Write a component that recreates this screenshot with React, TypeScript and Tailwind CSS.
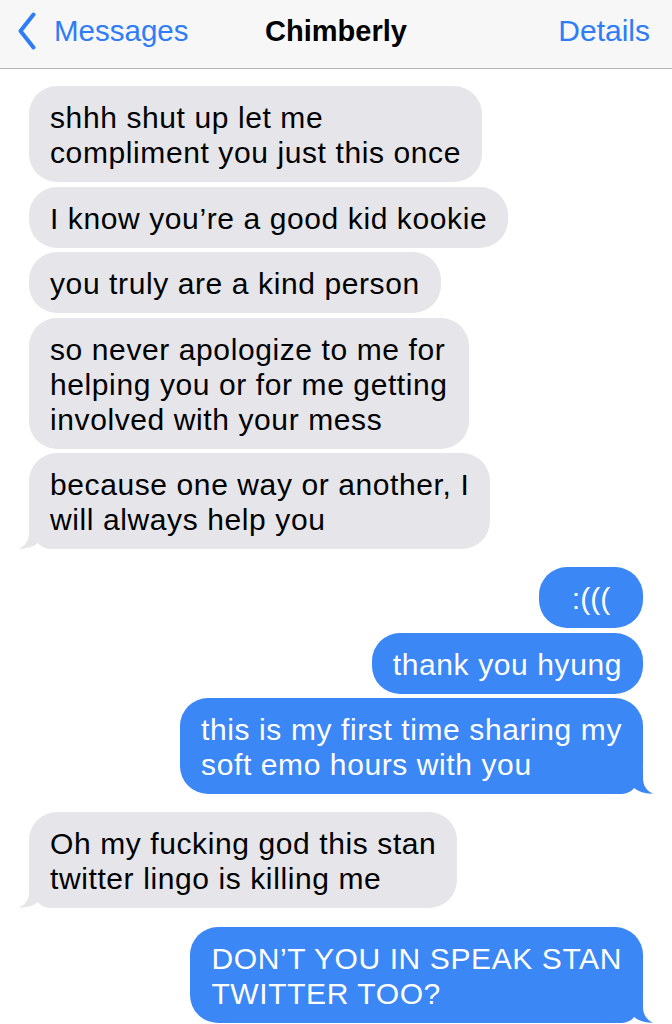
import React from "react";

const GRAY = "#e5e5ea";
const BLUE = "#3b87f5";

function Tail({ color, side }: { color: string; side: "left" | "right" }) {
  return (
    <svg
      width="40"
      height="26"
      viewBox="0 0 40 26"
      className={
        side === "left"
          ? "absolute bottom-0 left-[-10px]"
          : "absolute bottom-0 right-[-10px] scale-x-[-1]"
      }
    >
      <path
        d="M10 0 L10 10 C10 18 6 23 0 25.6 C7 26 14 24 19 20 C22 24 27 26 34 26 L40 26 L40 0 Z"
        fill={color}
      />
    </svg>
  );
}

function Bubble({
  lines,
  me,
  tail,
  className = "",
}: {
  lines: string[];
  me?: boolean;
  tail?: boolean;
  className?: string;
}) {
  return (
    <div className={`flex ${me ? "justify-end" : "justify-start"} ${className}`}>
      <div
        className={`relative rounded-[28px] px-[21px] pt-[14px] pb-[12px] leading-[35px] text-[30px] tracking-[0.6px] whitespace-nowrap ${
          me ? "bg-[#3b87f5] text-white" : "bg-[#e5e5ea] text-black"
        }`}
      >
        {tail && <Tail color={me ? BLUE : GRAY} side={me ? "right" : "left"} />}
        <div className="relative">
          {lines.map((l, i) => (
            <div key={i}>{l}</div>
          ))}
        </div>
      </div>
    </div>
  );
}

export default function App() {
  return (
    <div
      className="w-[672px] h-[1024px] overflow-hidden bg-white"
      style={{ fontFamily: '"Liberation Sans", Arial, sans-serif' }}
    >
      <div className="h-[69px] bg-[#f7f7f8] border-b border-[#b4b4b6] flex items-center pb-[6px] relative">
        <div className="flex items-center pl-[18px] text-[#2f7df6]">
          <svg width="18" height="38" viewBox="0 0 18 38">
            <polyline
              points="15.5,2.5 2.5,19 15.5,35.5"
              fill="none"
              stroke="#2f7df6"
              strokeWidth="4"
              strokeLinecap="round"
              strokeLinejoin="round"
            />
          </svg>
          <span className="ml-[18px] text-[29.5px] leading-none">Messages</span>
        </div>
        <div className="absolute left-0 right-0 top-0 bottom-[6px] flex items-center justify-center pointer-events-none">
          <span className="text-[29px] font-bold leading-none text-black">Chimberly</span>
        </div>
        <div className="ml-auto pr-[22px] text-[30px] leading-none text-[#2f7df6]">Details</div>
      </div>

      <div className="px-[29px] pt-[17px] flex flex-col">
        <Bubble lines={["shhh shut up let me", "compliment you just this once"]} />
        <Bubble className="mt-[4.5px]" lines={["I know you\u2019re a good kid kookie"]} />
        <Bubble className="mt-[4.5px]" lines={["you truly are a kind person"]} />
        <Bubble
          className="mt-[4.5px]"
          lines={["so never apologize to me for", "helping you or for me getting", "involved with your mess"]}
        />
        <Bubble
          className="mt-[4.5px]"
          tail
          lines={["because one way or another, I", "will always help you"]}
        />

        <div className="flex justify-end mt-[18px]">
          <div className="rounded-[28px] bg-[#3b87f5] text-white w-[104px] text-center pt-[14px] pb-[12px] leading-[35px] text-[30px]">
            :(((
          </div>
        </div>
        <Bubble me className="mt-[4.5px]" lines={["thank you hyung"]} />
        <Bubble
          me
          tail
          className="mt-[4.5px]"
          lines={["this is my first time sharing my", "soft emo hours with you"]}
        />

        <Bubble
          className="mt-[18px]"
          tail
          lines={["Oh my fucking god this stan", "twitter lingo is killing me"]}
        />
        <Bubble
          me
          tail
          className="mt-[19px]"
          lines={["DON\u2019T YOU IN SPEAK STAN", "TWITTER TOO?"]}
        />
      </div>
    </div>
  );
}
